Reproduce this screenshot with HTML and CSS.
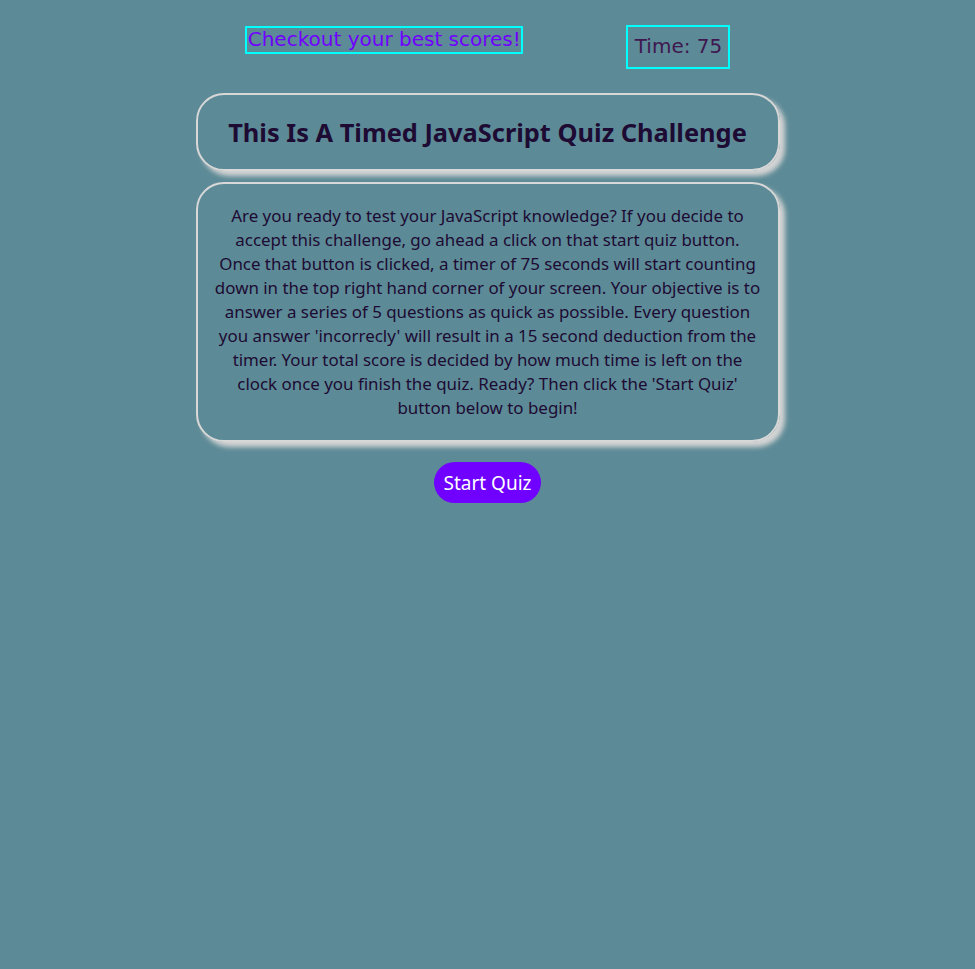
FILE: index.html
```html
<!DOCTYPE html>
<html>
<head>
<meta charset="utf-8">
<link rel="stylesheet" href="styles.css">
</head>
<body>
<header class="top">
  <a class="scores" href="#">Checkout your best scores!</a>
  <div class="timer">Time: 75</div>
</header>
<main class="main">
  <div class="card title-card"><h1>This Is A Timed JavaScript Quiz Challenge</h1></div>
  <div class="card text-card">
    <p>Are you ready to test your JavaScript knowledge? If you decide to<br>
    accept this challenge, go ahead a click on that start quiz button.<br>
    Once that button is clicked, a timer of 75 seconds will start counting<br>
    down in the top right hand corner of your screen. Your objective is to<br>
    answer a series of 5 questions as quick as possible. Every question<br>
    you answer 'incorrecly' will result in a 15 second deduction from the<br>
    timer. Your total score is decided by how much time is left on the<br>
    clock once you finish the quiz. Ready? Then click the 'Start Quiz'<br>
    button below to begin!</p>
  </div>
  <button class="start">Start Quiz</button>
</main>
</body>
</html>
```
FILE: styles.css
```css
html, body {
  margin: 0;
  padding: 0;
  background: #5c8a96;
  font-family: "Noto Sans", sans-serif;
}
.top {
  display: flex;
  justify-content: center;
  align-items: flex-start;
  gap: 103px;
  padding-top: 25px;
}
.scores {
  margin-top: 1px;
  border: 2px solid #00ffff;
  color: #7000ff;
  font-family: "DejaVu Sans", sans-serif;
  font-size: 20px;
  line-height: 23px;
  text-decoration: none;
  padding: 0 0 1px 1px;
}
.timer {
  border: 2px solid #00ffff;
  color: #3f1850;
  font-family: "DejaVu Sans", sans-serif;
  font-size: 20px;
  line-height: 23px;
  padding: 8px 6px 9px 7px;
}
.main {
  display: flex;
  flex-direction: column;
  align-items: center;
  padding-top: 24px;
}
.card {
  width: 584px;
  box-sizing: border-box;
  border: 2px solid #d8d8d8;
  border-radius: 28px;
  box-shadow: 5px 5px 5px #d4d4d4;
  text-align: center;
  color: #1d0b33;
}
.title-card {
  height: 78px;
  display: flex;
  align-items: center;
  justify-content: center;
}
.title-card h1 {
  margin: 0;
  font-size: 25.4px;
  font-weight: bold;
  line-height: 32px;
}
.text-card {
  margin-top: 11px;
  padding: 20px 8px 20px;
}
.text-card p {
  margin: 0;
  font-size: 16.9px;
  line-height: 24px;
}
.start {
  margin-top: 20px;
  width: 107px;
  height: 41px;
  border: none;
  border-radius: 21px;
  background: #7000ff;
  color: #ffffff;
  font-family: "Noto Sans", sans-serif;
  font-size: 19px;
  padding: 0;
}
```
